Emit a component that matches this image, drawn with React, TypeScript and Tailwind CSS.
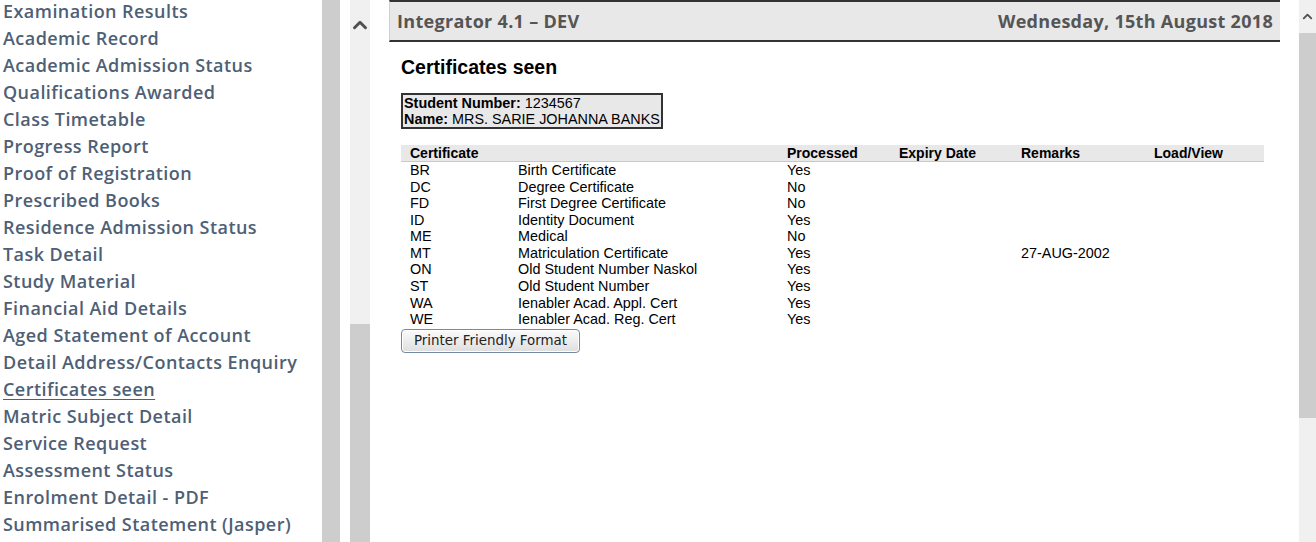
import { ChevronUp } from "lucide-react";

const menu = [
  "Examination Results",
  "Academic Record",
  "Academic Admission Status",
  "Qualifications Awarded",
  "Class Timetable",
  "Progress Report",
  "Proof of Registration",
  "Prescribed Books",
  "Residence Admission Status",
  "Task Detail",
  "Study Material",
  "Financial Aid Details",
  "Aged Statement of Account",
  "Detail Address/Contacts Enquiry",
  "Certificates seen",
  "Matric Subject Detail",
  "Service Request",
  "Assessment Status",
  "Enrolment Detail - PDF",
  "Summarised Statement (Jasper)",
];

const rows = [
  { code: "BR", name: "Birth Certificate", processed: "Yes", remarks: "" },
  { code: "DC", name: "Degree Certificate", processed: "No", remarks: "" },
  { code: "FD", name: "First Degree Certificate", processed: "No", remarks: "" },
  { code: "ID", name: "Identity Document", processed: "Yes", remarks: "" },
  { code: "ME", name: "Medical", processed: "No", remarks: "" },
  { code: "MT", name: "Matriculation Certificate", processed: "Yes", remarks: "27-AUG-2002" },
  { code: "ON", name: "Old Student Number Naskol", processed: "Yes", remarks: "" },
  { code: "ST", name: "Old Student Number", processed: "Yes", remarks: "" },
  { code: "WA", name: "Ienabler Acad. Appl. Cert", processed: "Yes", remarks: "" },
  { code: "WE", name: "Ienabler Acad. Reg. Cert", processed: "Yes", remarks: "" },
];

const App = () => {
  return (
    <div className="flex h-[542px] w-[1316px] overflow-hidden bg-white">
      {/* sidebar menu */}
      <div className="-mt-[2px] w-[322px] shrink-0 pl-[3px] font-['Open_Sans',sans-serif] text-[18px] font-semibold leading-[27px] tracking-[0.45px] text-[#4e6075]">
        {menu.map((item) => (
          <div key={item} className={item === "Certificates seen" ? "underline underline-offset-[3px] decoration-1" : ""}>
            {item}
          </div>
        ))}
      </div>
      <div className="w-[18px] shrink-0 bg-[#cdcdcd]" />
      <div className="w-[10px] shrink-0" />
      <div className="flex w-[20px] shrink-0 flex-col">
        <div className="flex h-[324px] flex-col items-center bg-[#f0f0f0] pt-[14px]">
          <ChevronUp className="h-[22px] w-[22px] text-[#505050]" strokeWidth={3.2} />
        </div>
        <div className="flex-1 bg-[#cdcdcd]" />
      </div>

      {/* main content */}
      <div className="flex-1 pl-[19px] pr-[19px]">
        <div className="flex h-[42px] items-center justify-between border-t-2 border-b-2 border-l border-t-[#333] border-b-[#333] border-l-[#cfcfcf] bg-[#e8e8e8] px-[7px] font-['Open_Sans',sans-serif] text-[18px] font-bold tracking-[0.3px] text-[#555]">
          <span>Integrator 4.1 – DEV</span>
          <span>Wednesday, 15th August 2018</span>
        </div>
        <div className="pl-[12px] pr-[16px] font-['Liberation_Sans',Arial,sans-serif] text-[14.4px] text-black">
          <h1 className="mt-[14px] text-[19.5px] font-bold leading-[22px]">Certificates seen</h1>
          <div className="mt-[15px] inline-block border-2 border-[#333] bg-[#e8e8e8] pl-[1px] pr-[1px] text-[14.4px] leading-[16px]">
            <div>
              <b>Student Number:</b> 1234567
            </div>
            <div>
              <b>Name:</b> MRS. SARIE JOHANNA BANKS
            </div>
          </div>
          <table className="mt-[14px] w-full border-collapse text-left leading-[16.55px]">
            <thead>
              <tr className="h-[17px] border-b border-[#c8c8c8] bg-[#e8e8e8] text-[14px]">
                <th className="w-[117px] pl-[9px] font-bold">Certificate</th>
                <th className="w-[269px]"></th>
                <th className="w-[112px] font-bold">Processed</th>
                <th className="w-[122px] font-bold">Expiry Date</th>
                <th className="w-[133px] font-bold">Remarks</th>
                <th className="font-bold">Load/View</th>
              </tr>
            </thead>
            <tbody>
              {rows.map((r) => (
                <tr key={r.code}>
                  <td className="pl-[9px]">{r.code}</td>
                  <td>{r.name}</td>
                  <td>{r.processed}</td>
                  <td></td>
                  <td>{r.remarks}</td>
                  <td></td>
                </tr>
              ))}
            </tbody>
          </table>
          <button className="mt-[1px] h-[24px] w-[179px] rounded-[4px] border border-[#7489a4] bg-gradient-to-b from-[#fbfbfb] to-[#dedede] font-['DejaVu_Sans',sans-serif] text-[13.4px] text-[#222] shadow-[inset_0_0_0_1px_#fff]">
            Printer Friendly Format
          </button>
        </div>
      </div>

      {/* page scrollbar */}
      <div className="flex w-[17px] shrink-0 flex-col bg-[#f0f0f0]">
        <div className="flex h-[33px] items-center justify-center">
          <ChevronUp className="h-[15px] w-[15px] text-[#505050]" strokeWidth={3} />
        </div>
        <div className="h-[385px] bg-[#cdcdcd]" />
      </div>
    </div>
  );
};

export default App;
